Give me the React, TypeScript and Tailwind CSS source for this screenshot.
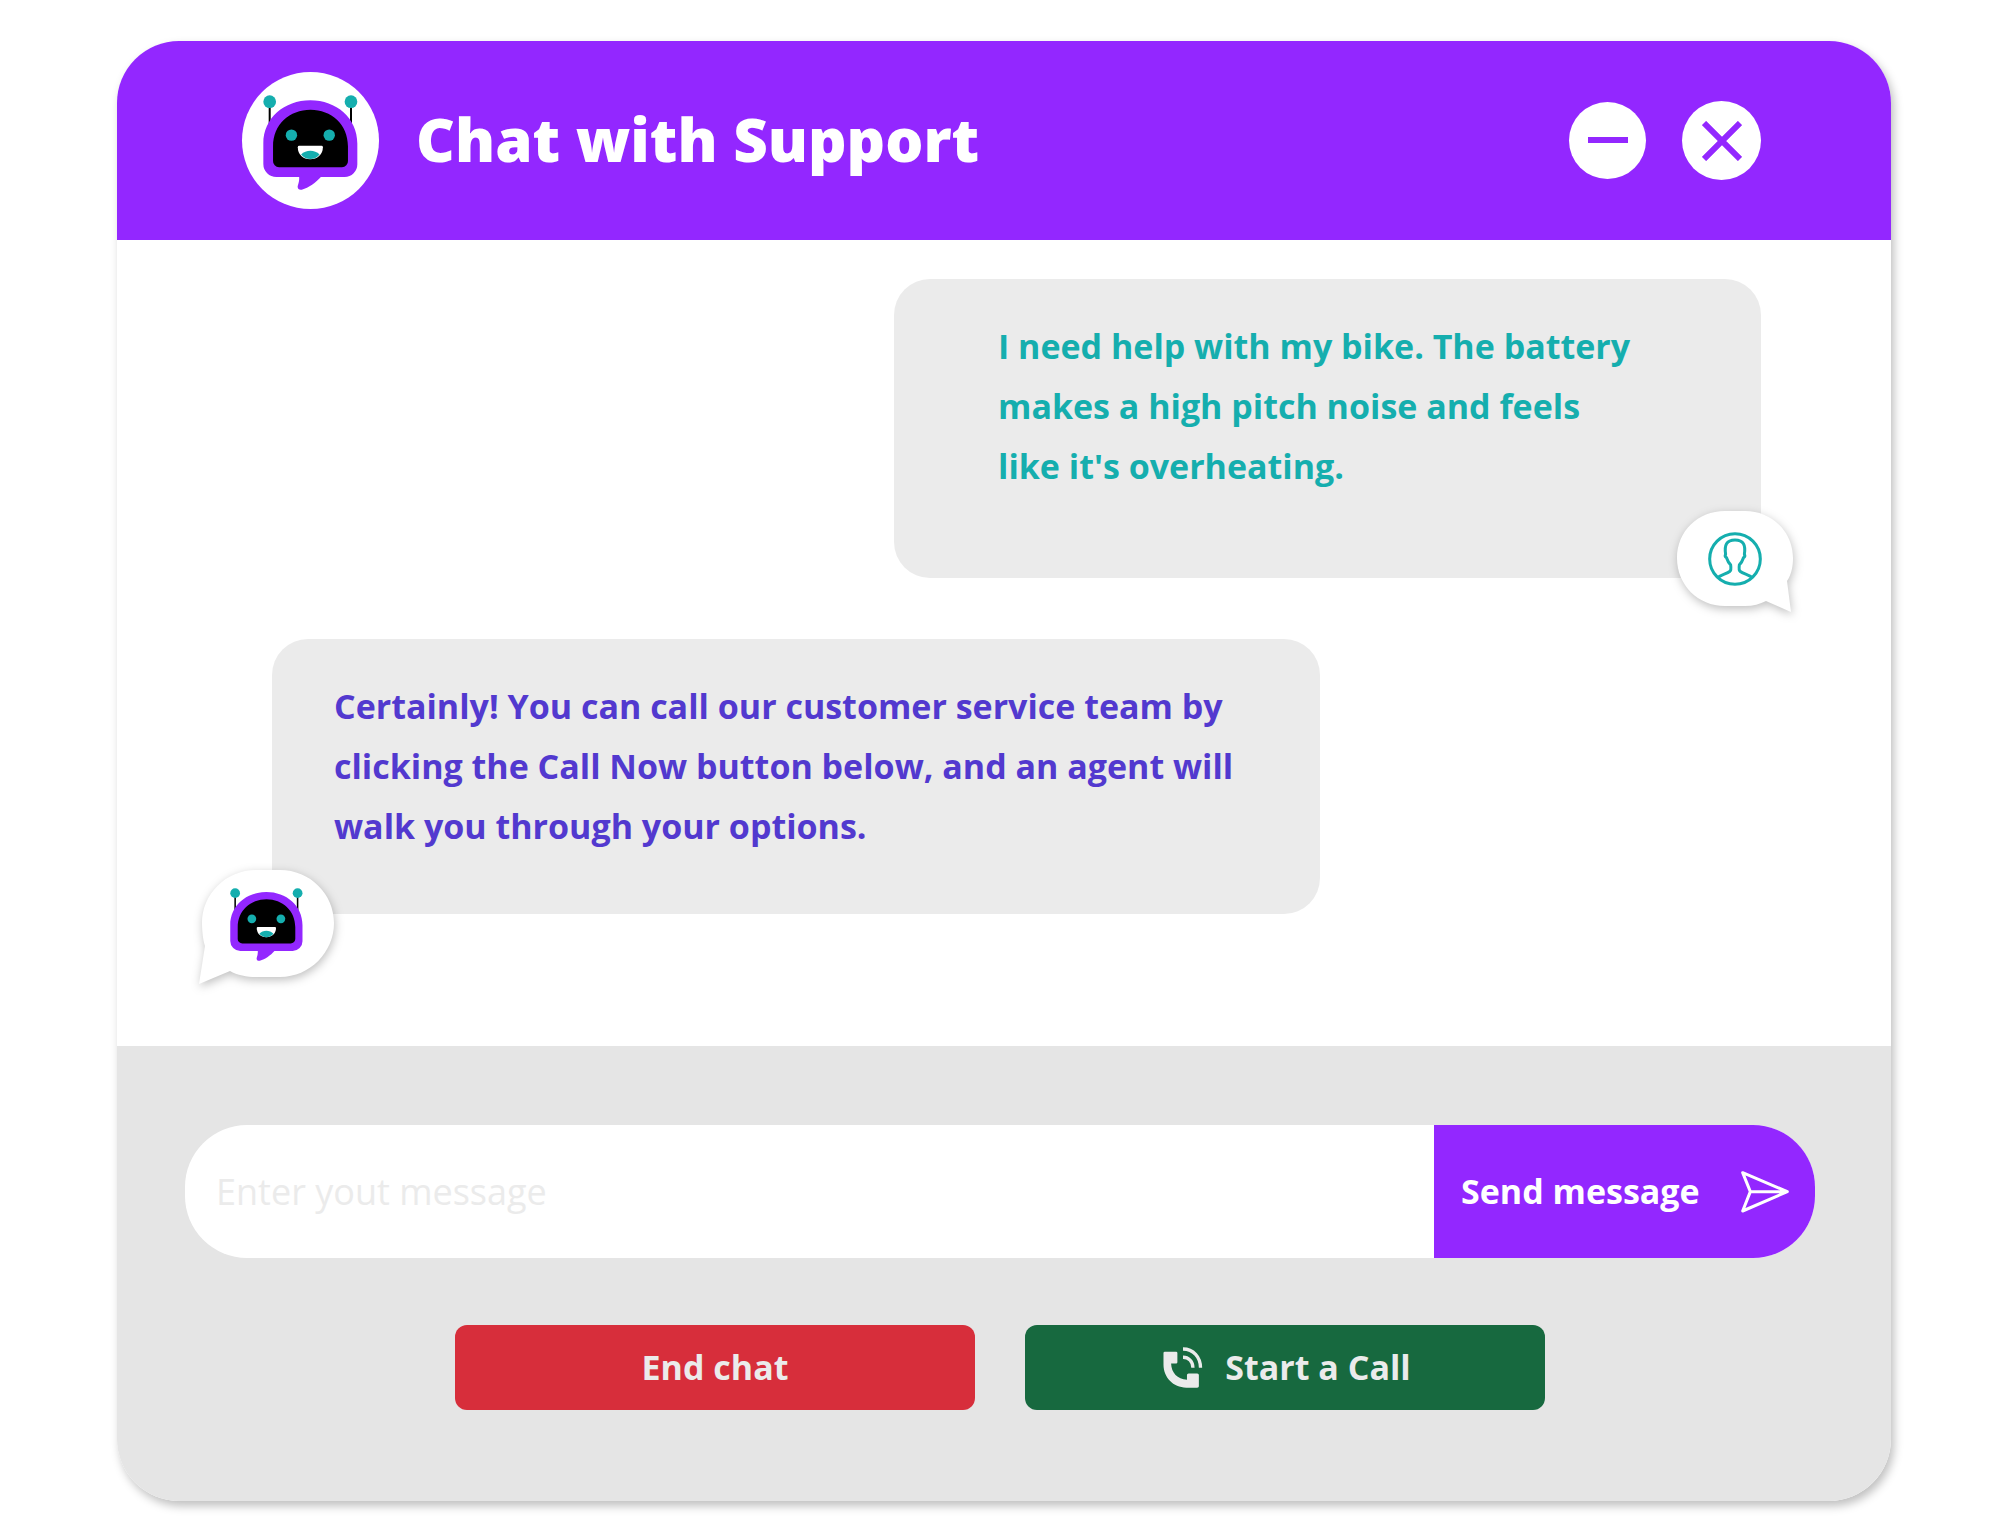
import React, { useState } from 'react';

const BotFace: React.FC<{ className?: string }> = ({ className }) => (
  <svg viewBox="520 227 284 284" className={className} aria-hidden="true">
    <path d="M540 250V330M783 250V330" stroke="#000" strokeWidth="6" />
    <circle cx="540" cy="247" r="19" fill="#15aeae" />
    <circle cx="783" cy="247" r="19" fill="#15aeae" />
    <path
      d="M521 372C521 296 584 243 661.500 243S802 296 802 372V434A38 38 0 0 1 764 472H693C678 489 657 504 636 510C627 512 622 506 624 498C627 489 629 481 628 472H560A39 39 0 0 1 521 433Z"
      fill="#9327ff"
    />
    <path
      d="M550 380C550 315 600 271 662 271S774 315 774 380V424A18 18 0 0 1 756 443H568A18 18 0 0 1 550 424Z"
      fill="#000"
    />
    <circle cx="605" cy="347" r="17" fill="#15aeae" />
    <circle cx="718" cy="347" r="17" fill="#15aeae" />
    <path d="M628 379H695Q699 379 699 383C699 405 682 419 661 419S624 405 624 383Q624 379 628 379Z" fill="#fff" />
    <path d="M634 405C648 390 675 390 689 405C675 423 648 423 634 405Z" fill="#15aeae" />
  </svg>
);

const PersonIcon = () => (
  <svg viewBox="203 125 160 161" className="size-[54px]" fill="none" stroke="#15aeae" strokeWidth="9" aria-hidden="true">
    <circle cx="283" cy="205.500" r="75.500" />
    <path d="M232 261C240 252 258 250 268 242C272 238 271 230 270 223C262 215 260 208 258 202C253 199 253 195 255 191C251 165 257 149 283 149S315 165 311 191C313 195 313 199 308 202C306 208 304 215 296 223C295 230 294 238 298 242C308 250 326 252 334 261" strokeLinejoin="round" />
  </svg>
);

const SendIcon = () => (
  <svg viewBox="964 182 144 126" className="h-[42px] w-12 shrink-0" fill="none" stroke="#fff" strokeWidth="9" strokeLinejoin="round" aria-hidden="true">
    <path d="M969 187L1103 244L969 302L992 244ZM992 244H1103" />
  </svg>
);

const PhoneIcon = () => (
  <svg viewBox="416 111 120 124" className="h-[41px] w-10 shrink-0" aria-hidden="true">
    <path
      d="M421 125H455Q459 125 459 129V157Q459 161 455 161H440C441 189 459 209 488 210V196Q488 191 493 191H519Q524 191 524 196V230Q524 234 519 234H486C446 234 417 203 417 165V129Q417 125 421 125Z"
      fill="#ebebeb"
    />
    <path d="M476 117C507 117 529 141 529 174M476 142C493 142 506 155 506 174" fill="none" stroke="#ebebeb" strokeWidth="10" />
  </svg>
);

const App: React.FC = () => {
  const [message, setMessage] = useState('');

  return (
    <div className="min-h-screen bg-white pt-[41px] pr-[109px] pb-9 pl-[117px] font-['Open_Sans',sans-serif] font-bold">
      <main className="overflow-clip rounded-[62px] bg-white shadow-[3px_5px_10px_rgba(0,0,0,0.25)]">
        <header className="flex h-[199px] items-center bg-[#9327ff] pr-[130px] pl-[125px]">
          <div className="flex size-[137px] shrink-0 items-center justify-center rounded-full bg-white">
            <BotFace className="mt-1 size-[95px]" />
          </div>
          <h1 className="ml-[37px] flex-1 pb-1 text-[60px] leading-none font-extrabold text-white">Chat with Support</h1>
          <div className="flex items-center gap-9">
            <button aria-label="Minimize" className="flex size-[77px] items-center justify-center rounded-full bg-white">
              <svg viewBox="0 0 40 40" className="size-10" stroke="#9327ff" strokeWidth="6" aria-hidden="true">
                <path d="M0 19H40" />
              </svg>
            </button>
            <button aria-label="Close" className="flex size-[79px] items-center justify-center rounded-full bg-white">
              <svg viewBox="0 0 40 40" className="size-10" stroke="#9327ff" strokeWidth="6" aria-hidden="true">
                <path d="M2 2L38 38M38 2L2 38" />
              </svg>
            </button>
          </div>
        </header>

        <section className="flex flex-col gap-[61px] pt-[39px] pr-[130px] pb-[132px] pl-[155px] text-[34px] leading-[60px]">
          <div className="relative w-[867px] self-end rounded-[36px] bg-[#ebebeb] pt-[37px] pr-[90px] pb-[82px] pl-[104px] text-[#15aeae]">
            <p>
              I need help with my bike. The battery
              <br />
              makes a high pitch noise and feels
              <br />
              like it's overheating.
            </p>
            <div className="absolute -right-8 -bottom-[34px] drop-shadow-[1px_3px_5px_rgba(0,0,0,0.25)]">
              <svg viewBox="0 0 116 101" className="h-[101px] w-[116px]" fill="#fff" aria-hidden="true">
                <path d="M48 0H68C95 0 116 21 116 47C116 56 114 64 110 70L114 101L89 90C83 93 76 95 68 95H48C21 95 0 74 0 47S21 0 48 0Z" />
              </svg>
              <div className="absolute top-[21px] left-[31px]">
                <PersonIcon />
              </div>
            </div>
          </div>

          <div className="relative w-[1048px] rounded-[36px] bg-[#ebebeb] pt-[37px] pr-12 pb-[58px] pl-[62px] text-[#5239cf]">
            <p>
              Certainly! You can call our customer service team by
              <br />
              clicking the Call Now button below, and an agent will
              <br />
              walk you through your options.
            </p>
            <div className="absolute -bottom-[70px] -left-[73px] drop-shadow-[1px_3px_5px_rgba(0,0,0,0.25)]">
              <svg viewBox="0 0 135 114" className="h-[114px] w-[135px]" fill="#fff" aria-hidden="true">
                <path d="M57 0H81C111 0 135 24 135 53S111 107 81 107H57C48 107 38 105 31 101L0 114L6 76C4 71 3 60 3 53C3 24 27 0 57 0Z" />
              </svg>
              <div className="absolute top-[18px] left-[31px]">
                <BotFace className="size-[73px]" />
              </div>
            </div>
          </div>
        </section>

        <footer className="bg-[#e5e5e5] pt-[79px] pr-[76px] pb-[91px] pl-[68px]">
          <form onSubmit={(e) => e.preventDefault()} className="flex h-[133px] overflow-hidden rounded-[62px] bg-white">
            <input
              type="text"
              aria-label="Message"
              placeholder="Enter yout message"
              value={message}
              onChange={(e) => setMessage(e.target.value)}
              className="min-w-0 flex-1 px-[31px] text-[36px] font-normal text-gray-800 outline-none placeholder:text-[#ebebeb]"
            />
            <button className="flex w-[381px] items-center justify-between bg-[#9327ff] pr-[26px] pl-[27px] text-[34px] whitespace-nowrap text-white">
              Send message
              <SendIcon />
            </button>
          </form>
          <div className="mt-[67px] flex justify-center gap-[50px] text-[34px] text-[#ebebeb]">
            <button className="h-[85px] w-[520px] rounded-xl bg-[#d72e3b]">End chat</button>
            <button className="flex h-[85px] w-[520px] items-center justify-center gap-[22px] rounded-xl bg-[#17693f] pl-1">
              <PhoneIcon />
              Start a Call
            </button>
          </div>
        </footer>
      </main>
    </div>
  );
};

export default App;
